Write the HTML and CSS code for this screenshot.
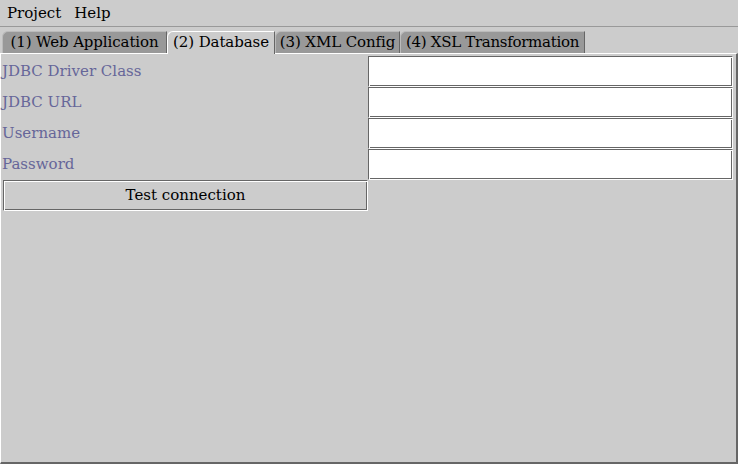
FILE: index.html
```html
<!DOCTYPE html>
<html>
<head>
<meta charset="utf-8">
<link rel="stylesheet" href="styles.css">
</head>
<body>
<div class="window">
  <div class="menubar">
    <span class="menu">Project</span>
    <span class="menu">Help</span>
  </div>
  <div class="tabs">
    <div class="tab t1">(1) Web Application</div>
    <div class="tab t2 selected">(2) Database</div>
    <div class="tab t3">(3) XML Config</div>
    <div class="tab t4">(4) XSL Transformation</div>
  </div>
  <div class="panel">
    <div class="form">
      <div class="label">JDBC Driver Class</div>
      <div class="field"></div>
      <div class="label">JDBC URL</div>
      <div class="field"></div>
      <div class="label">Username</div>
      <div class="field"></div>
      <div class="label">Password</div>
      <div class="field"></div>
      <div class="button">Test connection</div>
    </div>
  </div>
</div>
</body>
</html>
```
FILE: styles.css
```css
html, body {
  margin: 0;
  padding: 0;
  background: #cccccc;
}
body {
  font-family: "DejaVu Serif", "Liberation Serif", serif;
  font-size: 15px;
  color: #000;
}
.window {
  width: 738px;
  height: 464px;
  display: flex;
  flex-direction: column;
  overflow: hidden;
}
.menubar {
  border-bottom: 1px solid #999;
  display: flex;
  align-items: center;
  padding-left: 7px;
  gap: 13px;
  box-sizing: border-box;
  height: 27px;
}
.menu {
  line-height: 26px;
}
.tabs {
  display: flex;
  margin-top: 4px;
  padding-left: 2px;
  height: 22px;
}
.tab {
  position: relative;
  box-sizing: border-box;
  background: #999999;
  border: 1px solid #666;
  border-left-color: #bbb;
  border-top-color: #bbb;
  border-bottom: none;
  line-height: 21px;
  border-top-left-radius: 6px 6px;
  white-space: nowrap;
  text-align: center;
  overflow: hidden;
  letter-spacing: -0.1px;
}
.t1 { width: 165px; }
.t2 { width: 108px; }
.t3 { width: 125px; }
.t4 { width: 185px; letter-spacing: -0.3px; }
.tab.selected {
  background: #cccccc;
  border-color: #fff #666 #fff #fff;
  z-index: 1;
  margin-bottom: -1px;
  height: 23px;
}
.panel {
  flex: 1;
  border-top: 1px solid #fff;
  border-left: 1px solid #fff;
  border-right: 2px solid #666;
  border-bottom: 2px solid #666;
  padding: 2px 2px 0 1px;
}
.form {
  display: grid;
  grid-template-columns: 366px 365px;
  grid-auto-rows: 31px;
}
.label {
  color: #666699;
  line-height: 31px;
  padding-left: 0;
}
.field {
  background: #fff;
  border: 1px solid;
  border-color: #666 #fff #fff #666;
  box-shadow: inset 1px 1px 0 #fff, inset -1px -1px 0 #666;
}
.button {
  border: 1px solid;
  border-color: #666 #fff #fff #666;
  box-shadow: inset 1px 1px 0 #fff, inset -1px -1px 0 #666;
  text-align: center;
  line-height: 29px;
  margin-left: 1px;
}
```
